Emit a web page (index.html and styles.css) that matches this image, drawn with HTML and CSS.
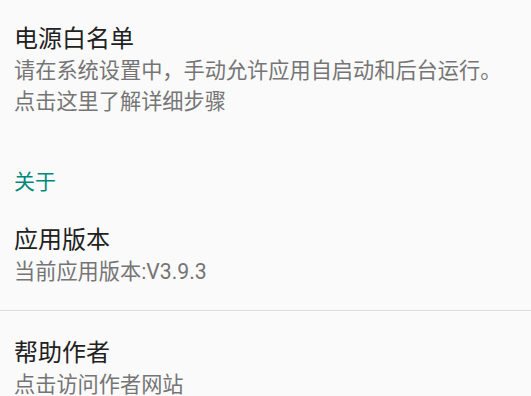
FILE: index.html
```html
<!DOCTYPE html>
<html lang="zh-CN">
<head>
  <meta charset="UTF-8">
  <title>设置</title>
  <link rel="stylesheet" href="styles.css">
</head>
<body>

  <div class="prefs">
    <div class="pref">
      <div class="pref-title">电源白名单</div>
      <div class="pref-summary">请在系统设置中，手动允许应用自启动和后台运行。<br>点击这里了解详细步骤</div>
    </div>

    <div class="category">关于</div>

    <div class="pref">
      <div class="pref-title">应用版本</div>
      <div class="pref-summary">当前应用版本:V3.9.3</div>
    </div>

    <div class="divider"></div>

    <div class="pref pref-after-divider">
      <div class="pref-title">帮助作者</div>
      <div class="pref-summary">点击访问作者网站</div>
    </div>
  </div>

</body>
</html>
```

FILE: styles.css
```css
body {
  margin: 0;
  background: #fafafa;
  font-family: Roboto, 'Noto Sans CJK SC', sans-serif;
  overflow: hidden;
}

.prefs {
  width: 531px;
}

.pref {
  padding: 23px 14px;
}

.pref-after-divider {
  padding-top: 26px;
}

.pref-title {
  font-size: 24px;
  line-height: 32px;
  color: #212121;
}

.pref-summary {
  font-size: 21.2px;
  line-height: 31px;
  color: #757575;
}

.category {
  padding: 27px 14px 4px;
  font-size: 21px;
  line-height: 30px;
  color: #00897b;
}

.divider {
  height: 1px;
  background: #dcdcdc;
}
```
